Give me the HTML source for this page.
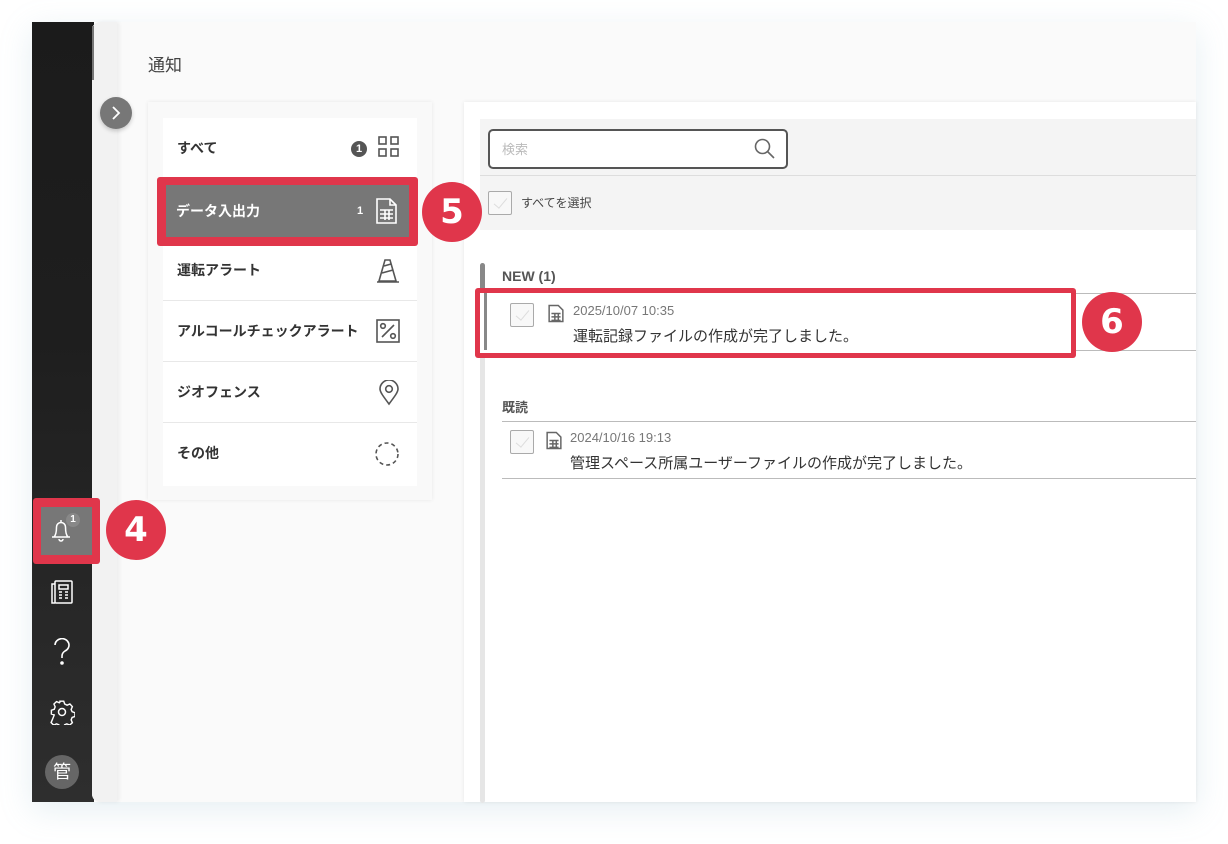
<!DOCTYPE html>
<html><head><meta charset="utf-8"><style>
*{box-sizing:border-box;margin:0;padding:0}
body{width:1228px;height:844px;background:#fff;position:relative;overflow:hidden;font-family:"Liberation Sans","Noto Sans CJK JP",sans-serif;color:#333}
.a{position:absolute}
.red{background:#e0364b}
.badge{position:absolute;width:60px;height:60px;border-radius:50%;background:#e0364b;color:#fff;font-weight:bold;font-size:34px;text-align:center;line-height:60px;font-family:"DejaVu Sans","Liberation Sans",sans-serif;z-index:5}
.row{position:absolute;left:163px;width:254px;height:61px;border-bottom:1px solid #e8e8e8;font-size:14px;font-weight:bold;color:#333;line-height:61px;padding-left:14px}
.row svg{position:absolute;right:17px;top:18px}
.cb{position:absolute;width:24px;height:24px;border:1px solid #aaa;border-radius:2px;background:#f8f8f8}
.cb:after{content:"";position:absolute;left:8px;top:3px;width:6px;height:12px;border-right:1px solid #ddd;border-bottom:1px solid #ddd;transform:rotate(40deg)}
</style></head><body>
<div class="a" style="left:32px;top:22px;width:1164px;height:780px;box-shadow:0 8px 30px rgba(140,180,200,.22)"></div>
<!-- sidebar -->
<div class="a" style="left:32px;top:22px;width:62px;height:780px;background:linear-gradient(#1b1b1b,#1e1e1e 40%,#2e2e2e)"></div>
<!-- main -->
<div class="a" style="left:92px;top:22px;width:1104px;height:780px;background:#fafafa;border-radius:8px 0 0 8px"></div>
<div class="a" style="left:92px;top:22px;width:25px;height:780px;background:#f2f2f2;border-radius:8px 0 0 8px;box-shadow:2px 0 4px rgba(0,0,0,.06)"></div>
<div class="a" style="left:92px;top:26px;width:2px;height:54px;background:#777"></div>
<div class="a" style="left:100px;top:97px;width:32px;height:32px;border-radius:50%;background:#777;box-shadow:0 2px 4px rgba(0,0,0,.2)"><svg width="32" height="32"><path d="M13 10l6 6-6 6" stroke="#fff" stroke-width="1.8" fill="none"/></svg></div>
<div class="a" style="left:148px;top:51px;font-size:17px;color:#444">通知</div>
<!-- left card -->
<div class="a" style="left:148px;top:102px;width:284px;height:398px;background:#f9f9f9;box-shadow:0 0 4px rgba(0,0,0,.08)"></div>
<div class="a" style="left:163px;top:118px;width:254px;height:368px;background:#fff"></div>
<div class="row" style="top:118px;border:none">すべて
<div class="a" style="left:188px;top:23px;width:16px;height:16px;border-radius:50%;background:#555;color:#fff;font-size:11px;line-height:16px;text-align:center">1</div>
<svg width="22" height="22" viewBox="0 0 22 22" fill="none" stroke="#555" stroke-width="1.6"><rect x="1" y="1" width="7" height="7"/><rect x="13" y="1" width="7" height="7"/><rect x="1" y="13" width="7" height="7"/><rect x="13" y="13" width="7" height="7"/></svg></div>
<div class="row" style="top:240px">運転アラート<svg width="24" height="26" viewBox="0 0 24 26" fill="none" stroke="#555" stroke-width="1.6"><path d="M9 2h5l6 21H3z"/><path d="M8 8l7-2M6 15l11-3"/><path d="M1 24h22"/></svg></div>
<div class="row" style="top:301px">アルコールチェックアラート<svg width="24" height="24" viewBox="0 0 24 24" fill="none" stroke="#555" stroke-width="1.6"><rect x="1" y="1" width="22" height="22"/><path d="M6 18L18 6"/><circle cx="7" cy="7" r="2.3"/><circle cx="17" cy="17" r="2.3"/></svg></div>
<div class="row" style="top:362px">ジオフェンス<svg width="22" height="26" viewBox="0 0 22 26" fill="none" stroke="#555" stroke-width="1.6"><path d="M11 24C5 16 2 12 2 9a9 9 0 0118 0c0 3-3 7-9 15z"/><circle cx="11" cy="9" r="3.3"/></svg></div>
<div class="row" style="top:423px;border:none">その他<svg width="26" height="26" viewBox="0 0 26 26" fill="none" stroke="#555" stroke-width="1.6" stroke-dasharray="4 3"><circle cx="13" cy="13" r="11"/></svg></div>
<!-- right panel -->
<div class="a" style="left:464px;top:102px;width:732px;height:700px;background:#fff;box-shadow:0 0 4px rgba(0,0,0,.08)"></div>
<div class="a" style="left:480px;top:119px;width:716px;height:111px;background:#f4f4f4"></div>
<div class="a" style="left:480px;top:175px;width:716px;height:1px;background:#ddd"></div>
<div class="a" style="left:488px;top:129px;width:300px;height:40px;border:2px solid #555;border-radius:5px;background:#fff;font-size:13px;color:#bbb;padding:8px 12px">検索
<svg class="a" style="left:264px;top:7px" width="22" height="22" viewBox="0 0 22 22" fill="none" stroke="#666" stroke-width="1.6"><circle cx="8.5" cy="8.5" r="7"/><path d="M13.5 13.5L20 20"/></svg></div>
<div class="cb" style="left:488px;top:191px"></div>
<div class="a" style="left:521px;top:194px;font-size:12px;color:#444">すべてを選択</div>
<div class="a" style="left:480px;top:263px;width:5px;height:540px;background:#e6e6e6;border-radius:3px"></div>
<div class="a" style="left:480px;top:263px;width:5px;height:90px;background:#888;border-radius:3px 3px 0 0"></div>
<div class="a" style="left:502px;top:268px;font-size:14px;font-weight:bold;color:#555">NEW (1)</div>
<div class="a" style="left:502px;top:293px;width:694px;height:1px;background:#bbb"></div>
<div class="a" style="left:502px;top:350px;width:694px;height:1px;background:#bbb"></div>
<div class="a red" style="left:475px;top:288px;width:601px;height:70px;border-radius:3px"></div>
<div class="a" style="left:480px;top:293px;width:591px;height:60px;background:#fff"></div>
<div class="a" style="left:484px;top:293px;width:3px;height:57px;background:#888"></div>
<div class="cb" style="left:510px;top:303px"></div>
<svg class="a" style="left:548px;top:304px" width="16" height="19" viewBox="0 0 14 16" fill="none" stroke="#666" stroke-width="1.3"><path d="M1 1h8l4 4v10H1z"/><path d="M3 8h8M3 11h8M3 14h8M6 8v7M9 8v7"/></svg>
<div class="a" style="left:573px;top:303px;font-size:13px;color:#777">2025/10/07 10:35</div>
<div class="a" style="left:573px;top:325px;font-size:15px;color:#333">運転記録ファイルの作成が完了しました。</div>
<div class="a" style="left:502px;top:397px;font-size:13px;font-weight:bold;color:#555">既読</div>
<div class="a" style="left:502px;top:421px;width:694px;height:1px;background:#bbb"></div>
<div class="a" style="left:502px;top:478px;width:694px;height:1px;background:#bbb"></div>
<div class="cb" style="left:510px;top:430px"></div>
<svg class="a" style="left:546px;top:431px" width="16" height="19" viewBox="0 0 14 16" fill="none" stroke="#666" stroke-width="1.3"><path d="M1 1h8l4 4v10H1z"/><path d="M3 8h8M3 11h8M3 14h8M6 8v7M9 8v7"/></svg>
<div class="a" style="left:570px;top:430px;font-size:13px;color:#777">2024/10/16 19:13</div>
<div class="a" style="left:570px;top:452px;font-size:15px;color:#333">管理スペース所属ユーザーファイルの作成が完了しました。</div>
<!-- selected row -->
<div class="a red" style="left:157px;top:177px;width:261px;height:69px;border-radius:3px"></div>
<div class="a" style="left:166px;top:185px;width:243px;height:52px;background:#777;color:#fff;font-size:14px;font-weight:bold;line-height:52px;padding-left:10px">データ入出力
<span class="a" style="left:191px;top:0;font-size:11px">1</span>
<svg class="a" style="left:210px;top:13px" width="22" height="26" viewBox="0 0 22 26" fill="none" stroke="#fff" stroke-width="1.6"><path d="M1 1h13l6 6v18H1z"/><path d="M14 1v6h6"/><path d="M4 12h13M4 16h13M4 20h13M9 12v10M13 12v10"/></svg></div>
<!-- sidebar icons -->
<div class="a red" style="left:33px;top:498px;width:67px;height:66px;border-radius:3px"></div>
<div class="a" style="left:41px;top:507px;width:51px;height:48px;background:#777"></div>
<svg class="a" style="left:48px;top:514px" width="30" height="30" viewBox="0 0 30 30" fill="none" stroke="#fff" stroke-width="1.5"><path d="M4 23h18M6 23c2-2 2.5-6 2.5-10a4.5 4.5 0 019 0c0 4 .5 8 2.5 10"/><path d="M11 25a2 2 0 004 0"/><path d="M13 6v2"/></svg>
<div class="a" style="left:66px;top:513px;width:14px;height:14px;border-radius:50%;background:#888;color:#fff;font-size:10px;font-weight:bold;text-align:center;line-height:14px">1</div>
<svg class="a" style="left:50px;top:580px" width="24" height="24" viewBox="0 0 24 24" fill="none" stroke="#fff" stroke-width="1.5"><rect x="5" y="1" width="17" height="22" rx="1"/><path d="M5 4H2v19h3"/><rect x="9" y="5" width="9" height="4"/><path d="M9 12h3M15 12h3M9 15h3M15 15h3M9 18h3M15 18h3"/></svg>
<svg class="a" style="left:51px;top:638px" width="22" height="28" viewBox="0 0 22 28" fill="none" stroke="#fff" stroke-width="1.6"><path d="M4 7a7 6.5 0 1110 6c-2 1.3-3 2.5-3 5v2"/><circle cx="11" cy="25" r="1" fill="#fff"/></svg>
<svg class="a" style="left:49px;top:699px" width="26" height="26" viewBox="0 0 26 26" fill="none" stroke="#fff" stroke-width="1.5"><path d="M11 2h4l1 3 2.5 1.2 3-1.3 2.6 2.8-1.3 3 1 2.4 3 1v4l-3 1-1 2.5 1.3 3-2.8 2.6-3-1.3-2.4 1-1 3h-4l-1-3-2.5-1-3 1.3-2.7-2.7 1.3-3L5 16.5 2 15.5v-4l3-1 1-2.5-1.3-3L7.4 2.4l3 1.3L11 3z" transform="scale(.95) translate(.5 .3)"/><circle cx="13" cy="13" r="3.5"/></svg>
<div class="a" style="left:45px;top:755px;width:34px;height:34px;border-radius:50%;background:#666;color:#fff;font-size:18px;text-align:center;line-height:34px">管</div>
<div class="badge" style="left:422px;top:182px">5</div>
<div class="badge" style="left:1082px;top:292px">6</div>
<div class="badge" style="left:106px;top:500px">4</div>
</body></html>
